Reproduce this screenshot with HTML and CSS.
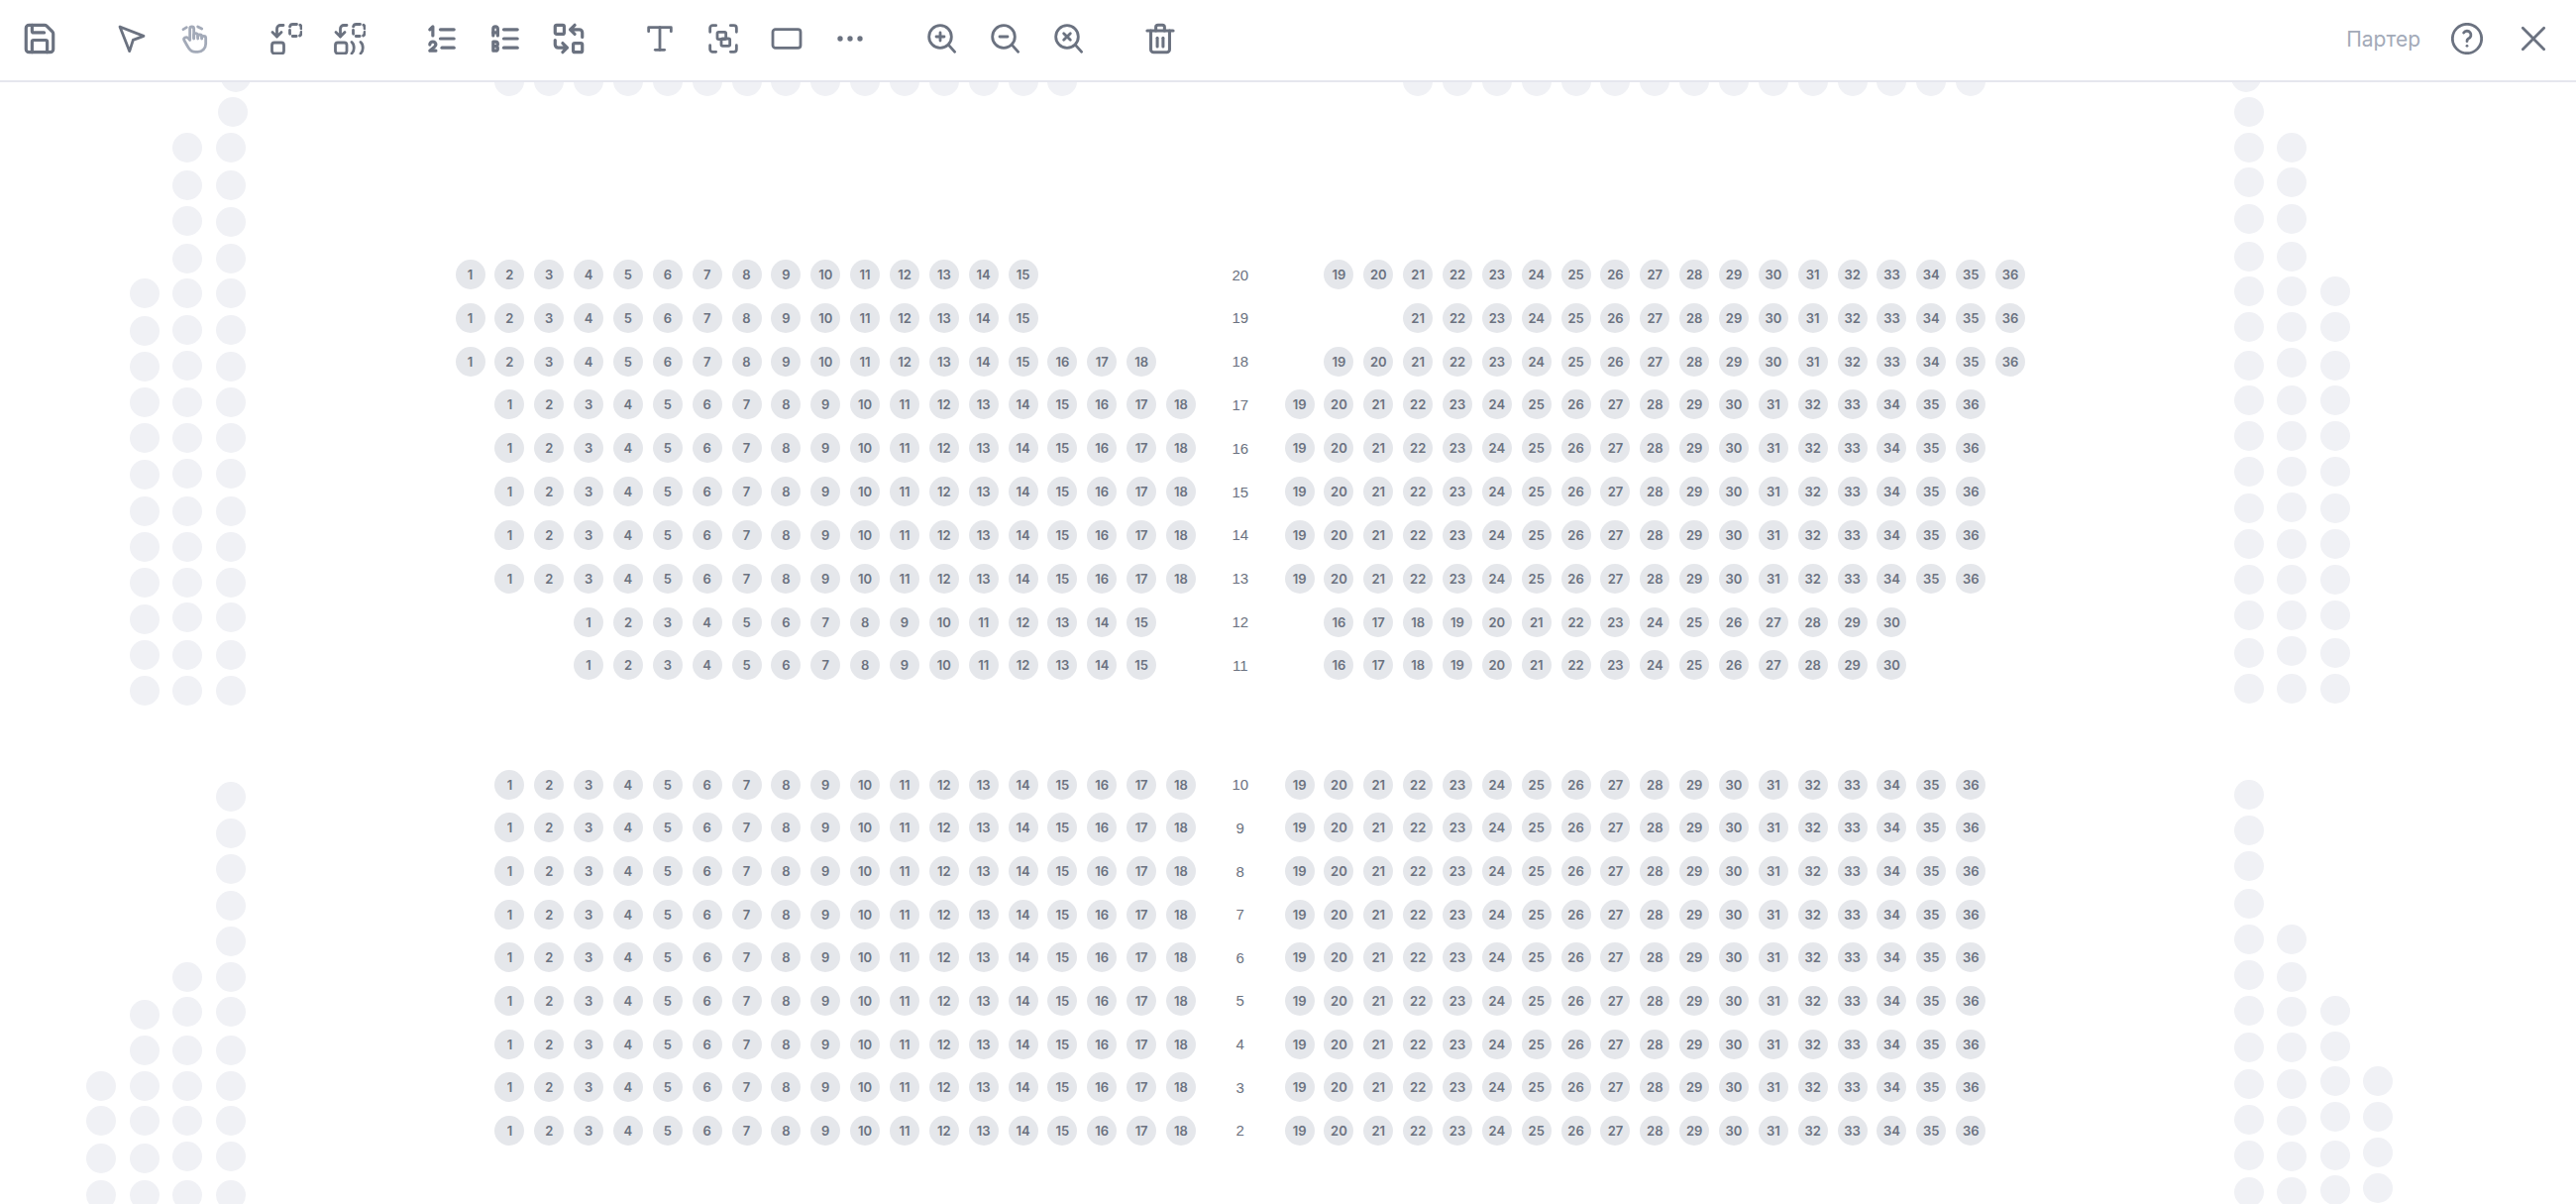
FILE: index.html
```html
<!DOCTYPE html>
<html lang="ru">
    <head>
        <meta charset="utf-8">
        <title>Партер</title>
        <link rel="stylesheet" href="styles.css">
    </head>
    <body>
        <header class="toolbar">
            <div class="tool-group">
                <button class="tool"><svg viewBox="1.500 1.500 21 21"><path d="M15.2 3a2 2 0 0 1 1.4.6l3.8 3.8a2 2 0 0 1 .6 1.4V19a2 2 0 0 1-2 2H5a2 2 0 0 1-2-2V5a2 2 0 0 1 2-2z"/><path d="M17 21v-7a1 1 0 0 0-1-1H8a1 1 0 0 0-1 1v7"/><path d="M7 3v4a1 1 0 0 0 1 1h7"/></svg></button>
            </div>
            <div class="tool-group">
                <button class="tool"><svg viewBox="0 0 24 24"><path d="M3 3 21 10 13 13l-2.700 8.500z"/></svg></button>
                <button class="tool tool-muted"><svg viewBox="0 0 24 24"><path d="M8 13V4.500a1.500 1.500 0 0 1 3 0V12"/><path d="M11 11.500v-2a1.500 1.500 0 0 1 3 0V12"/><path d="M14 10.500a1.500 1.500 0 0 1 3 0V12"/><path d="M17 11.500a1.500 1.500 0 0 1 3 0V16a6 6 0 0 1-6 6h-2 .208a6 6 0 0 1-5.012-2.700L7 19c-.312-.479-1.407-2.388-3.286-5.728a1.500 1.500 0 0 1 .536-2.022 1.867 1.867 0 0 1 2.280.280L8 13"/><path d="M3 5l2.500-1.500"/><path d="M14 3l3 1.500"/></svg></button>
            </div>
            <div class="tool-group">
                <button class="tool"><svg viewBox="0 0 32 32"><rect x="1.500" y="20" width="12" height="11" rx="2.500"/><rect class="dashed" x="19.500" y="1.500" width="11.500" height="12" rx="3"/><path d="M13 2.500h-3a3.500 3.500 0 0 0-3.500 3.500v8"/><path d="M2 9.500l4.500 4.500L11 9.500"/></svg></button>
                <button class="tool"><svg viewBox="0 0 32 32"><rect x="1.500" y="20" width="11.500" height="11" rx="2.500"/><rect class="dashed" x="19.500" y="1.500" width="11.500" height="12" rx="3"/><path d="M13 2.500h-3a3.500 3.500 0 0 0-3.500 3.500v8"/><path d="M2 9.500l4.500 4.500L11 9.500"/><path d="M18 19.500c3 2.500 3 9 0 11.500"/><path d="M27 19.500c3 2.500 3 9 0 11.500"/></svg></button>
            </div>
            <div class="tool-group">
                <button class="tool"><svg viewBox="1.500 1.500 21 21"><path d="M11 6h9"/><path d="M11 12h9"/><path d="M12 18h8"/><path d="M4 16a2 2 0 1 1 4 0c0 .591-.500 1-1 1.500L4 20h4"/><path d="M6 10V4L4 6"/></svg></button>
                <button class="tool"><svg viewBox="1.500 1.500 21 21"><path d="M11 6h9"/><path d="M11 12h9"/><path d="M11 18h9"/><path d="M4 10V5.500a1.500 1.500 0 0 1 3 0V10"/><path d="M4 8h3"/><path d="M4 20h1.500a1.500 1.500 0 0 0 0-3H4h1.500a1.500 1.500 0 0 0 0-3H4z"/></svg></button>
                <button class="tool"><svg viewBox="1.500 1.500 21 21"><rect x="3" y="3" width="6" height="6" rx="1"/><rect x="15" y="15" width="6" height="6" rx="1"/><path d="M21 11V8a2 2 0 0 0-2-2h-6l3 3m0-6-3 3"/><path d="M3 13v3a2 2 0 0 0 2 2h6l-3-3m0 6 3-3"/></svg></button>
            </div>
            <div class="tool-group">
                <button class="tool"><svg viewBox="0 0 24 24"><path d="M3.500 6.500v-3h17v3"/><path d="M12 3.500v17"/><path d="M8.500 20.500h7"/></svg></button>
                <button class="tool"><svg viewBox="0 0 24 24"><path d="M2 7V4a2 2 0 0 1 2-2h2.500"/><path d="M17.500 2H20a2 2 0 0 1 2 2v3"/><path d="M22 17v3a2 2 0 0 1-2 2h-2.500"/><path d="M6.500 22H4a2 2 0 0 1-2-2v-3"/><rect x="7.500" y="7" width="6.500" height="5.500" rx="1"/><rect x="10.500" y="12" width="6.500" height="5.500" rx="1"/></svg></button>
                <button class="tool"><svg viewBox="0 0 24 24"><rect x="1.500" y="5" width="21" height="14" rx="2"/></svg></button>
                <button class="tool"><svg viewBox="0 0 24 24"><circle class="dot" cx="4.500" cy="12" r="2"/><circle class="dot" cx="12" cy="12" r="2"/><circle class="dot" cx="19.500" cy="12" r="2"/></svg></button>
            </div>
            <div class="tool-group">
                <button class="tool"><svg viewBox="0 0 24 24"><circle cx="10.500" cy="10.500" r="8.500"/><path d="M7.500 10.500h6"/><path d="M10.500 7.500v6"/><path d="M17 17l4.500 5"/></svg></button>
                <button class="tool"><svg viewBox="0 0 24 24"><circle cx="10.500" cy="10.500" r="8.500"/><path d="M7.500 10.500h6"/><path d="M17 17l4.500 5"/></svg></button>
                <button class="tool"><svg viewBox="0 0 24 24"><circle cx="10.500" cy="10.500" r="8.500"/><path d="M8 8l5 5"/><path d="M13 8l-5 5"/><path d="M17 17l4.500 5"/></svg></button>
            </div>
            <div class="tool-group">
                <button class="tool"><svg viewBox="1 .5 22 22"><path d="M3 6h18"/><path d="M10 11v6"/><path d="M14 11v6"/><path d="M5.500 6v13a2 2 0 0 0 2 2h9a2 2 0 0 0 2-2V6"/><path d="M9 6V3.500a1.500 1.500 0 0 1 1.500-1.500h3A1.500 1.500 0 0 1 15 3.500V6"/></svg></button>
            </div>
            <div class="toolbar-right">
                <span class="hall-name">Партер</span>
                <button class="tool"><svg viewBox="0 0 24 24"><circle cx="12" cy="12" r="11"/><path d="M12 17.500v.01"/><path d="M12 14a2 2 0 0 1 1-2 3 3 0 1 0-3.500-4.500"/></svg></button>
                <button class="tool"><svg viewBox="0 0 24 24"><path d="M4 4l16 16"/><path d="M20 4 4 20"/></svg></button>
            </div>
        </header>

        <main class="hall" id="hall">
            <div class="block block-top" id="rows_top"></div>
            <div class="block block-bottom" id="rows_bottom"></div>
        </main>

        <script src="seats.js"></script>
    </body>
</html>
```

FILE: styles.css
```css
* {
    box-sizing: border-box;
}

body {
    height: 100vh;
    margin: 0;
    overflow: hidden;
    background-color: #fff;
    font-family: Inter, "Noto Sans", sans-serif;
}

.toolbar {
    position: relative;
    z-index: 2;
    display: flex;
    align-items: flex-start;
    gap: 28.5px;
    height: 83px;
    padding-top: 7px;
    padding-left: 8px;
    padding-right: 11px;
    background-color: #fff;
    border-bottom: 2px solid #e5e6ee;
}

.tool-group {
    display: flex;
}

.tool {
    display: flex;
    justify-content: center;
    align-items: center;
    width: 64px;
    height: 64px;
    padding: 0;
    border: 0;
    background: none;
    color: #6b7280;
    cursor: pointer;
}

.tool-muted {
    color: #a3aab8;
}

.tool svg {
    width: 32px;
    height: 32px;
    fill: none;
    stroke: currentColor;
    stroke-width: 2.1;
    stroke-linecap: round;
    stroke-linejoin: round;
}

.tool svg[viewBox="0 0 32 32"] {
    stroke-width: 2.8;
}

.tool svg .dashed {
    stroke-dasharray: 4 3.5;
}

.tool svg .dot {
    fill: currentColor;
    stroke: none;
}

.toolbar-right {
    display: flex;
    align-items: center;
    gap: 3px;
    margin-left: auto;
}

.hall-name {
    margin-right: 12px;
    font-size: 21px;
    color: #a3aab8;
}

.hall {
    position: relative;
    padding-top: 179px;
    padding-left: 454.6px;
}

.block {
    display: flex;
    flex-direction: column;
}

.block-top {
    gap: 13.84px;
}

.block-bottom {
    gap: 13.63px;
    margin-top: 90.4px;
}

.seat-row {
    display: grid;
    grid-template-columns: repeat(40, 39.86px);
    height: 30px;
}

.seat {
    display: flex;
    justify-content: center;
    align-items: center;
    justify-self: center;
    width: 30px;
    height: 30px;
    border-radius: 50%;
    background-color: #e5e7eb;
    color: #6b7280;
    font-size: 13px;
    font-weight: 600;
}

.row-label {
    align-self: center;
    text-align: center;
    font-family: "Liberation Sans", Arial, sans-serif;
    font-size: 15px;
    color: #6b7280;
}

.seat-far {
    position: absolute;
    width: 30px;
    height: 30px;
    border-radius: 50%;
    background-color: #f0f1f5;
}
```

FILE: seats.js
```js
const PITCH = 39.86;
const START_X = 474.5;
const HEADER = 83;

// rows: number, then [column of first seat, first seat number, last seat number]
const topRows = [
    [20, [0, 1, 15], [22, 19, 36]],
    [19, [0, 1, 15], [24, 21, 36]],
    [18, [0, 1, 18], [22, 19, 36]],
    [17, [1, 1, 18], [21, 19, 36]],
    [16, [1, 1, 18], [21, 19, 36]],
    [15, [1, 1, 18], [21, 19, 36]],
    [14, [1, 1, 18], [21, 19, 36]],
    [13, [1, 1, 18], [21, 19, 36]],
    [12, [3, 1, 15], [22, 16, 30]],
    [11, [3, 1, 15], [22, 16, 30]]
];

const bottomRows = [];
for (let n = 10; n >= 2; n--) {
    bottomRows.push([n, [1, 1, 18], [21, 19, 36]]);
}

function addSeats(row, part) {
    let col = part[0];
    for (let n = part[1]; n <= part[2]; n++) {
        const seat = document.createElement("div");
        seat.className = "seat";
        seat.style.gridColumn = col + 1;
        seat.style.gridRow = 1;
        seat.textContent = n;
        row.appendChild(seat);
        col++;
    }
}

function drawRows(list, id) {
    const block = document.getElementById(id);
    for (let i = 0; i < list.length; i++) {
        const row = document.createElement("div");
        row.className = "seat-row";
        addSeats(row, list[i][1]);
        addSeats(row, list[i][2]);

        const label = document.createElement("div");
        label.className = "row-label";
        label.style.gridColumn = "20 / span 2";
        label.style.gridRow = 1;
        label.textContent = list[i][0];
        row.appendChild(label);

        block.appendChild(row);
    }
}

drawRows(topRows, "rows_top");
drawRows(bottomRows, "rows_bottom");

// balcony seats around the stalls, these are not on a regular grid
const farSeats = [
    [238, [78]],
    [235.3, [113]],
    [233, [149.4, 186.9, 224.4, 260.6, 296.3, 332.5, 370, 406.2, 442.4, 478.1, 515.6, 551.8, 588, 622.9, 661.2, 697.4,
           804.3, 840.7, 876.7, 914.3, 950.3, 986.3, 1021.3, 1059.7, 1096, 1131, 1167, 1205.7]],
    [189.3, [149.4, 186.9, 223.1, 260.6, 296.3, 332.5, 368.7, 406.2, 442.4, 478.1, 515.6, 551.8, 588, 622.9, 661.2, 697.4,
             986.3, 1021.3, 1059.7, 1096, 1131, 1167, 1205.7]],
    [146, [296.3, 333.8, 370, 406.2, 442.4, 479.4, 515.6, 551.8, 588, 625, 661.2, 697.4,
           1023.7, 1059.7, 1096, 1131, 1169.3, 1205.7]],
    [102.3, [1096, 1131, 1169.3, 1205.7]],
    [2266.7, [78]],
    [2269.7, [113.2, 149.4, 184.4, 220.6, 259.3, 293.8, 330, 368.7, 403.7, 439.9, 476, 513, 549.3, 585, 621.2, 658.7, 694.9,
              802, 838.3, 874.3, 911.7, 947.7, 984, 1020, 1057.3, 1093.7, 1129.7, 1165.7, 1203]],
    [2313.3, [149.4, 184.4, 220.6, 259.3, 293.8, 330, 366.2, 403.7, 439.9, 476, 511.8, 549.3, 585, 621.2, 657.4, 694.9,
              947.7, 986.3, 1021.3, 1057.3, 1093.7, 1131, 1167, 1203]],
    [2357, [293.8, 330, 368.7, 403.7, 439.9, 476, 513, 549.3, 585, 621.2, 658.7, 694.9,
            1020, 1056, 1091, 1127.3, 1165.7, 1200.7]],
    [2400.3, [1091, 1127.3, 1163.3, 1199.3]]
];

// the row that is cut off by the toolbar
for (let c = 1; c <= 15; c++) {
    farSeats.push([START_X + c * PITCH, [82]]);
}
for (let c = 24; c <= 38; c++) {
    farSeats.push([START_X + c * PITCH, [82]]);
}

const hall = document.getElementById("hall");
for (let i = 0; i < farSeats.length; i++) {
    const ys = farSeats[i][1];
    for (let j = 0; j < ys.length; j++) {
        const seat = document.createElement("div");
        seat.className = "seat-far";
        seat.style.left = (farSeats[i][0] - 15) + "px";
        seat.style.top = (ys[j] - 15 - HEADER) + "px";
        hall.appendChild(seat);
    }
}
```
